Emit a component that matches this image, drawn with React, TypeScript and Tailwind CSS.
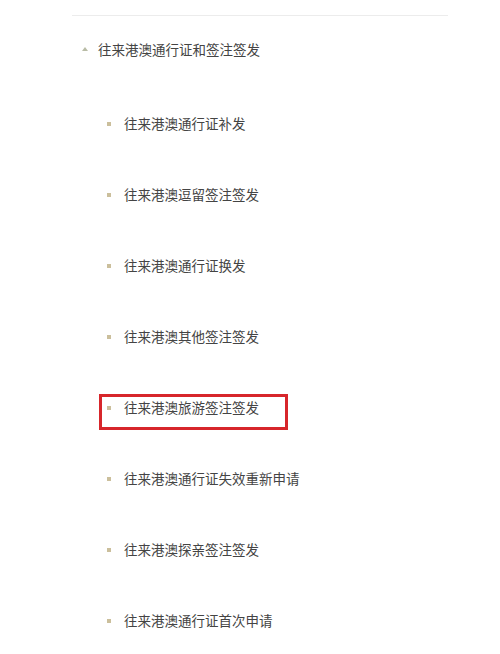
import React from "react";

const items = [
  "往来港澳通行证补发",
  "往来港澳逗留签注签发",
  "往来港澳通行证换发",
  "往来港澳其他签注签发",
  "往来港澳旅游签注签发",
  "往来港澳通行证失效重新申请",
  "往来港澳探亲签注签发",
  "往来港澳通行证首次申请",
];

export default function App() {
  return (
    <div
      className="h-[654px] w-[500px] overflow-hidden bg-white pt-[15px] text-[#444]"
      style={{ fontFamily: '"Noto Sans CJK SC", "Noto Sans", sans-serif' }}
    >
      <div className="ml-[72px] w-[376px] border-t border-[#ececec]">
        {/* Section heading */}
        <div className="flex h-[65px] items-center pl-[10px]">
          <span className="h-0 w-0 border-x-[3.5px] border-b-[4px] border-x-transparent border-b-[#b9bca6]" />
          <span className="ml-[10px] text-[13.5px] leading-5">往来港澳通行证和签注签发</span>
        </div>

        {/* Sub items */}
        <div className="mt-[8px]">
          {items.map((label, i) => {
            const active = i === 4;
            return (
              <div key={label} className="flex h-[71px] items-start pl-[27px] pt-[21px]">
                <div
                  className={
                    active
                      ? "flex h-[36px] w-[189px] items-start border-[3px] border-[#d7262b] pl-[5px]"
                      : "flex h-[36px] items-start border-[3px] border-transparent pl-[5px]"
                  }
                >
                  <span className="mt-[9px] h-[4px] w-[4px] shrink-0 bg-[#cbbf9c]" />
                  <span className="ml-[13px] text-[13.5px] leading-5">{label}</span>
                </div>
              </div>
            );
          })}
        </div>
      </div>
    </div>
  );
}
